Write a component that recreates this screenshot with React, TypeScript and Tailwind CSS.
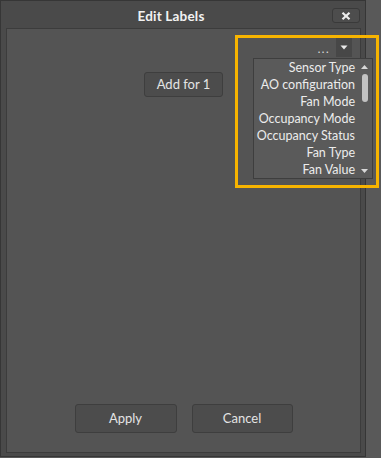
import React from "react";

const items = [
  "Sensor Type",
  "AO configuration",
  "Fan Mode",
  "Occupancy Mode",
  "Occupancy Status",
  "Fan Type",
  "Fan Value",
];

export default function App() {
  return (
    <div
      className="relative w-[381px] h-[458px] bg-[#595959] overflow-hidden"
      style={{ fontFamily: "Lato, 'Noto Sans', sans-serif" }}
    >
      <div className="w-[366px] h-[457px] bg-[#4a4a4a] border border-[#363636] flex flex-col">
        {/* title bar */}
        <div className="h-[27px] flex items-center relative shrink-0">
          <div className="flex-1 text-center pr-[24px] pt-[3px] text-[13.5px] font-bold text-[#f2f2f2] tracking-[0.2px]">
            Edit Labels
          </div>
          <div className="absolute right-[5px] top-[7px] w-[28px] h-[15px] rounded-[3px] border border-[#3a3a3a] bg-[#4d4d4d] flex items-center justify-center">
            <svg width="10" height="8" viewBox="0 0 10 8">
              <path d="M1.5 0.8 L8.5 7.2 M8.5 0.8 L1.5 7.2" stroke="#eeeeee" strokeWidth="2.2" />
            </svg>
          </div>
        </div>
        {/* inner panel */}
        <div className="relative ml-[5px] mr-[4px] mb-[3px] flex-1 bg-[#545454] border border-[#3c3c3c] flex flex-col">
          <div className="flex justify-end pt-[9px] pr-[8px]">
            <div className="flex items-center">
              <span className="text-[11px] text-[#e0e0e0] leading-none mr-[6px] mt-[2px] tracking-[1.5px]">...</span>
              <div className="w-[16px] h-[19px] bg-[#474747] flex items-center justify-center">
                <svg width="8" height="5" viewBox="0 0 8 5">
                  <path d="M0.5 0.5 H7.5 L4 4.5 Z" fill="#e8e8e8" />
                </svg>
              </div>
            </div>
          </div>
          <div className="flex pl-[137px] mt-[15px]">
            <div className="w-[79px] h-[25px] rounded-[3px] border border-[#3e3e3e] bg-[#4c4c4c] flex items-center justify-center text-[13px] text-[#e4e4e4]">
              Add for 1
            </div>
          </div>
          <div className="flex-1" />
          <div className="flex justify-center gap-[15px] pb-[19px]">
            <div className="w-[102px] h-[29px] rounded-[3px] border border-[#3e3e3e] bg-[#4c4c4c] flex items-center justify-center text-[13px] text-[#e4e4e4]">
              Apply
            </div>
            <div className="w-[101px] h-[29px] rounded-[3px] border border-[#3e3e3e] bg-[#4c4c4c] flex items-center justify-center text-[13px] text-[#e4e4e4]">
              Cancel
            </div>
          </div>
        </div>
      </div>

      {/* dropdown list popup */}
      <div className="absolute left-[253px] top-[58px] w-[120px] h-[121px] bg-[#5a5a5a] border border-[#3e3e3e] flex">
        <div className="flex-1 flex flex-col py-[1px] pr-[2px]">
          {items.map((t) => (
            <div key={t} className="h-[17px] flex items-center justify-end text-[12.5px] text-[#ececec] whitespace-nowrap">
              {t}
            </div>
          ))}
        </div>
        <div className="w-[15px] flex flex-col items-center pt-[6px] pb-[5px]">
          <svg width="7" height="4" viewBox="0 0 7 4">
            <path d="M0 4 H7 L3.5 0 Z" fill="#d8d8d8" />
          </svg>
          <div className="w-[6px] h-[28px] mt-[5px] rounded-[3px] bg-[#c2c2c2]" />
          <div className="flex-1" />
          <svg width="7" height="4" viewBox="0 0 7 4">
            <path d="M0 0 H7 L3.5 4 Z" fill="#d8d8d8" />
          </svg>
        </div>
      </div>

      {/* orange highlight */}
      <div className="absolute left-[235px] top-[35px] w-[144px] h-[153px] border-[3px] border-[#f7b400]" />
    </div>
  );
}
